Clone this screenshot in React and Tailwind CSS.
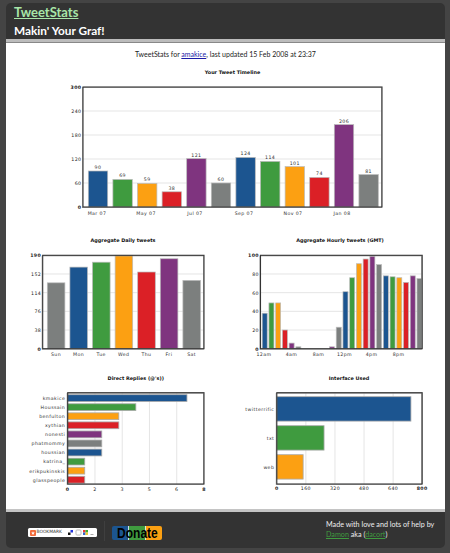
import React from "react";

const BLUE = "#1c5590";
const GREEN = "#3f9b3f";
const ORANGE = "#fca012";
const RED = "#db2026";
const PURPLE = "#7f347f";
const GRAY = "#7c7f7e";
const colors = [BLUE, GREEN, ORANGE, RED, PURPLE, GRAY];

const labelFont = { fontFamily: "'DejaVu Sans', sans-serif", fontSize: 4.7, letterSpacing: 0.4 };

// all chart numbers are in page coordinates, the svg viewBox takes care of the offset
const PlotFrame = ({ x, y, w, h }) => (
  <>
    <rect x={x - 0.6} y={y + 0.6} width={w} height={h} fill="none" stroke="#999" strokeWidth="0.8" />
    <rect x={x} y={y} width={w} height={h} fill="none" stroke="#333" strokeWidth="1.1" />
  </>
);

const ColumnChart = ({ box, plot, ticks, max, bars, start, pitch, barW, xLabels, valueLabels, xLabelY }) => {
  const { x, y, w, h } = plot;
  const bottom = y + h;
  return (
    <svg className="block" width={box.w} height={box.h} viewBox={`${box.x} ${box.y} ${box.w} ${box.h}`} style={labelFont}>
      {ticks.map((t) => (
        <g key={t}>
          {t > 0 && t < max && (
            <line x1={x} x2={x + w} y1={bottom - (t / max) * h} y2={bottom - (t / max) * h} stroke="#e2e2e2" strokeWidth="0.9" />
          )}
          <text
            x={x - 1.5}
            y={bottom - (t / max) * h + 1.9}
            textAnchor="end"
            fill="#222"
            fontWeight={t === 0 || t === max ? "bold" : "normal"}
          >
            {t}
          </text>
        </g>
      ))}
      {bars.map((b, i) => {
        if (b.v === 0) return null;
        const bh = (b.v / max) * h;
        const bx = start + i * pitch;
        return (
          <g key={i}>
            <rect x={bx} y={bottom - bh} width={barW} height={bh} fill={b.c} stroke="#bbb" strokeWidth="0.7" />
            {valueLabels && (
              <text x={bx + barW / 2} y={bottom - bh - 2} textAnchor="middle" fill="#333">{b.v}</text>
            )}
          </g>
        );
      })}
      <PlotFrame {...plot} />
      {xLabels.map((l) => (
        <text key={l.t} x={l.x} y={xLabelY} textAnchor="middle" fill="#333">{l.t}</text>
      ))}
    </svg>
  );
};

const RowChart = ({ box, plot, ticks, max, bars, start, pitch, barH, tickLabelY }) => {
  const { x, y, w, h } = plot;
  return (
    <svg className="block" width={box.w} height={box.h} viewBox={`${box.x} ${box.y} ${box.w} ${box.h}`} style={labelFont}>
      {ticks.map((t, i) => {
        const tx = x + (i / (ticks.length - 1)) * w;
        const isEnd = i === 0 || i === ticks.length - 1;
        return (
          <g key={t}>
            {!isEnd && <line x1={tx} x2={tx} y1={y} y2={y + h} stroke="#e2e2e2" strokeWidth="0.9" />}
            <text x={tx} y={tickLabelY} textAnchor="middle" fill="#222" fontWeight={isEnd ? "bold" : "normal"}>{t}</text>
          </g>
        );
      })}
      {bars.map((b, i) => {
        const by = start + i * pitch;
        return (
          <g key={b.n}>
            <rect x={x} y={by} width={(b.v / max) * w} height={barH} fill={b.c} stroke="#aaa" strokeWidth="0.8" />
            <text x={x - 2.5} y={by + barH / 2 + 1.9} textAnchor="end" fill="#333">{b.n}</text>
          </g>
        );
      })}
      <PlotFrame {...plot} />
    </svg>
  );
};

const timeline = [90, 69, 59, 38, 121, 60, 124, 114, 101, 74, 206, 81].map((v, i) => ({ v, c: colors[i % 6] }));
const daily = [
  { v: 134, c: GRAY },
  { v: 166, c: BLUE },
  { v: 176, c: GREEN },
  { v: 190, c: ORANGE },
  { v: 156, c: RED },
  { v: 183, c: PURPLE },
  { v: 139, c: GRAY },
];
const hourly = [38, 49, 49, 20, 6, 2, 0, 0, 0, 0, 2, 23, 61, 76, 91, 96, 99, 90, 78, 77, 76, 71, 78, 75].map((v, i) => ({
  v,
  c: colors[i % 6],
}));
const replies = [
  ["kmakice", 7],
  ["Houssain", 4],
  ["benfulton", 3],
  ["xythian", 3],
  ["nonesti", 2],
  ["phatmommy", 2],
  ["houssian", 2],
  ["katrina_", 1],
  ["erikpukinskis", 1],
  ["glasspeople", 1],
].map(([n, v], i) => ({ n, v, c: colors[i % 6] }));
const clients = [
  { n: "twitterrific", v: 738, c: BLUE },
  { n: "txt", v: 260, c: GREEN },
  { n: "web", v: 145, c: ORANGE },
];

const ChartTitle = ({ className, children }) => (
  <h3 className={`h-[10px] text-center text-[4.9px] leading-[10px] font-bold text-[#111] [font-family:'DejaVu_Sans',sans-serif] ${className}`}>
    {children}
  </h3>
);

export default function App() {
  return (
    <div className="h-[553px] w-[450px] overflow-hidden bg-[#444444] px-[6px] pt-[3px] [font-family:Lato,sans-serif]">
      <div className="w-[439px]">
        <header className="h-[36px] rounded-t-[5px] bg-[#333333] pl-[8px] pt-[2px]">
          <a href="#" className="block text-[13px] leading-[15px] font-bold text-[#a8e6a8] underline">TweetStats</a>
          <h1 className="mt-[2px] text-[11.8px] leading-[17px] font-bold text-white">Makin' Your Graf!</h1>
        </header>
        <div className="h-[4px] border-b border-[#888888] bg-[#bcbcbc]" />

        <main className="h-[466px] bg-white">
          <p className="pt-[6px] text-center text-[7px] leading-[10px] text-[#222]">
            TweetStats for <a href="#" className="text-[#1a1aa6] underline">amakice</a>, last updated 15 Feb 2008 at 23:37
          </p>
          <div className="mt-[8px]">
            <ChartTitle className="pl-[14px]">Your Tweet Timeline</ChartTitle>
          </div>
          <ColumnChart
            box={{ x: 6, y: 77, w: 439, h: 149 }}
            plot={{ x: 83, y: 87, w: 299, h: 120 }}
            ticks={[0, 60, 120, 180, 240, 300]}
            max={300}
            bars={timeline}
            start={88.3}
            pitch={24.6}
            barW={19.4}
            valueLabels
            xLabelY={215}
            xLabels={[
              { t: "Mar 07", x: 97 },
              { t: "May 07", x: 146 },
              { t: "Jul 07", x: 195 },
              { t: "Sep 07", x: 244 },
              { t: "Nov 07", x: 293 },
              { t: "Jan 08", x: 342 },
            ]}
          />

          <div className="mt-[9px] grid grid-cols-2">
            <div>
              <ChartTitle className="pl-[14.5px]">Aggregate Daily tweets</ChartTitle>
              <ColumnChart
                box={{ x: 6, y: 245, w: 219.5, h: 124 }}
                plot={{ x: 42.7, y: 255.3, w: 161.3, h: 93.4 }}
                ticks={[0, 38, 76, 114, 152, 190]}
                max={190}
                bars={daily}
                start={47.3}
                pitch={22.6}
                barW={17.6}
                xLabelY={356}
                xLabels={["Sun", "Mon", "Tue", "Wed", "Thu", "Fri", "Sat"].map((t, i) => ({ t, x: 56 + i * 22.6 }))}
              />
            </div>
            <div>
              <ChartTitle className="pl-[9.5px]">Aggregate Hourly tweets (GMT)</ChartTitle>
              <ColumnChart
                box={{ x: 225.5, y: 245, w: 219.5, h: 124 }}
                plot={{ x: 260, y: 255.3, w: 161.7, h: 93.4 }}
                ticks={[0, 20, 40, 60, 80, 100]}
                max={100}
                bars={hourly}
                start={261.7}
                pitch={6.73}
                barW={5}
                xLabelY={356}
                xLabels={[
                  { t: "12am", x: 263.5 },
                  { t: "4am", x: 291 },
                  { t: "8am", x: 318 },
                  { t: "12pm", x: 344 },
                  { t: "4pm", x: 371 },
                  { t: "8pm", x: 398 },
                ]}
              />
            </div>
          </div>

          <div className="mt-[4px] grid grid-cols-2">
            <div>
              <ChartTitle className="pl-[40px]">Direct Replies (@'s))</ChartTitle>
              <RowChart
                box={{ x: 6, y: 383, w: 219.5, h: 126 }}
                plot={{ x: 67.7, y: 392.7, w: 136.3, h: 91.3 }}
                ticks={[0, 2, 3, 5, 6, 8]}
                max={8}
                bars={replies}
                start={394.7}
                pitch={9.07}
                barH={6.8}
                tickLabelY={491}
              />
            </div>
            <div>
              <ChartTitle className="pl-[27.5px]">Interface Used</ChartTitle>
              <RowChart
                box={{ x: 225.5, y: 383, w: 219.5, h: 126 }}
                plot={{ x: 276.3, y: 392.7, w: 145.4, h: 91.3 }}
                ticks={[0, 160, 320, 480, 640, 800]}
                max={800}
                bars={clients}
                start={396.7}
                pitch={29}
                barH={24.4}
                tickLabelY={490}
              />
            </div>
          </div>
        </main>

        <div className="h-[3px] bg-[#c4c4c4]" />
        <footer className="flex h-[36px] items-center rounded-b-[5px] bg-[#333333] pl-[22px]">
          <div className="mt-[5px] flex h-[9px] w-[69px] items-center gap-[1px] rounded-[1.5px] bg-white pl-[1.5px]">
            <svg width="6" height="6" viewBox="0 0 6 6" className="shrink-0">
              <rect width="6" height="6" rx="1" fill="#f26b3a" />
              <path d="M3 1.2 3.5 2.5 4.8 2.5 3.8 3.4 4.2 4.8 3 4 1.8 4.8 2.2 3.4 1.2 2.5 2.5 2.5Z" fill="#fff" />
            </svg>
            <span className="w-[28px] text-[4.4px] leading-none text-[#333] [font-family:'DejaVu_Sans',sans-serif]">BOOKMARK</span>
            <svg width="29" height="7" viewBox="0 0 29 7" className="shrink-0">
              <rect x="2" y="3.5" width="2.5" height="2.5" fill="#111" />
              <rect x="4.5" y="1" width="2.5" height="2.5" fill="#2233dd" />
              <rect x="10" y="1" width="5" height="5" rx="1" fill="none" stroke="#bbb" />
              <rect x="17" y="1" width="2.5" height="2.5" fill="#e33" />
              <rect x="19.5" y="1" width="2.5" height="2.5" fill="#3a3" />
              <rect x="17" y="3.5" width="2.5" height="2.5" fill="#36c" />
              <rect x="19.5" y="3.5" width="2.5" height="2.5" fill="#ec3" />
              <rect x="24.5" y="5" width="3" height="1" fill="#aaa" />
            </svg>
          </div>
          <div className="ml-[7px] mt-[1px] h-[20px] w-px bg-[#3f3f3f]" />
          <div className="relative ml-[6.5px] mt-[6px] flex h-[14px] w-[50.5px]">
            <div className="flex-1 rounded-l-[2px] border-r border-white/80 bg-[#1c5590]" />
            <div className="flex-1 border-r border-white/80 bg-[#3f9b3f]" />
            <div className="flex-1 rounded-r-[2px] bg-[#fca012]" />
            <span className="absolute inset-0 scale-x-[0.8] text-center text-[15px] leading-[14px] font-bold text-black [font-family:'Liberation_Sans',sans-serif]">
              Donate
            </span>
          </div>
          <div className="ml-auto w-[119px] pb-[1px] text-[7.2px] leading-[10px] whitespace-nowrap text-[#eeeeee]">
            <p>Made with love and lots of help by</p>
            <p>
              <a href="#" className="text-[#3f9b3f] underline">Damon</a> aka (<a href="#" className="text-[#3f9b3f] underline">dacort</a>)
            </p>
          </div>
        </footer>
      </div>
    </div>
  );
}
